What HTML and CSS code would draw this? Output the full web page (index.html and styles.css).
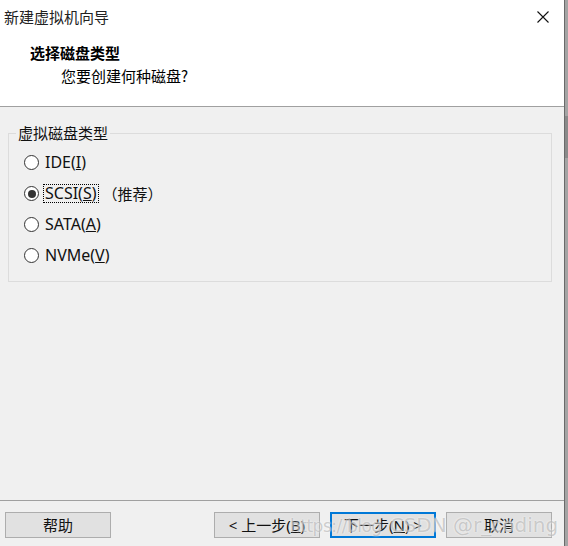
FILE: index.html
```html
<!DOCTYPE html>
<html lang="zh-CN">
<head>
<meta charset="utf-8">
<title>新建虚拟机向导</title>
<link rel="stylesheet" href="styles.css">
</head>
<body>
<div class="screen">
  <div class="window">
    <div class="header">
      <div class="titlebar">
        <span class="title">新建虚拟机向导</span>
        <svg class="close" width="12" height="12" viewBox="0 0 12 12"><path d="M0.5 0.5 L11.5 11.5 M11.5 0.5 L0.5 11.5" stroke="#111" stroke-width="1.1" fill="none"/></svg>
      </div>
      <div class="heading">选择磁盘类型</div>
      <div class="sub">您要创建何种磁盘?</div>
    </div>
    <div class="body">
      <fieldset class="group">
        <legend class="legend">虚拟磁盘类型</legend>
        <div class="options">
          <div class="option"><span class="radio"></span><span class="label">IDE(<u>I</u>)</span></div>
          <div class="option"><span class="radio checked"></span><span class="label focus">SCSI(<u>S</u>)</span><span class="note">（推荐）</span></div>
          <div class="option"><span class="radio"></span><span class="label">SATA(<u>A</u>)</span></div>
          <div class="option"><span class="radio"></span><span class="label">NVMe(<u>V</u>)</span></div>
        </div>
      </fieldset>
    </div>
    <div class="footer">
      <button class="btn">帮助</button>
      <div class="spacer"></div>
      <button class="btn">&lt; 上一步(<u>B</u>)</button>
      <button class="btn default">下一步(<u>N</u>) &gt;</button>
      <button class="btn">取消</button>
      <div class="watermark"><span class="wm1">https://blog</span><span class="wm2">CSDN @r_coding</span></div>
    </div>
  </div>
  <div class="edge"><div class="edge-thumb"></div></div>
</div>
</body>
</html>
```
FILE: styles.css
```css
*, *::before, *::after { box-sizing: border-box; }
html, body {
  margin: 0;
  padding: 0;
  width: 568px;
  height: 546px;
  overflow: hidden;
  background: #f0f0f0;
}
.screen {
  display: flex;
  width: 568px;
  height: 546px;
  font-family: "Noto Sans", "Noto Sans CJK SC", sans-serif;
  font-size: 16px;
  color: #1a1a1a;
}
.window {
  width: 564px;
  display: flex;
  flex-direction: column;
  background: #f0f0f0;
  position: relative;
}
.header {
  height: 107px;
  background: #fff;
  border-bottom: 1px solid #a0a0a0;
}
.titlebar {
  height: 33px;
  display: flex;
  align-items: center;
  justify-content: space-between;
  padding: 0 15px 0 4px;
}
.title {
  font-family: "Noto Sans CJK SC", sans-serif;
  font-size: 15px;
  line-height: 20px;
  color: #222;
}
.close { display: block; }
.heading {
  margin-top: 10px;
  padding-left: 30px;
  font-family: "Noto Sans CJK SC", sans-serif;
  font-weight: bold;
  font-size: 15px;
  line-height: 20px;
  color: #000;
}
.sub {
  margin-top: 3px;
  padding-left: 61px;
  font-family: "Noto Sans CJK SC", sans-serif;
  font-size: 15px;
  line-height: 20px;
  color: #000;
}
.body {
  flex: 1;
  padding: 16px 12px 0 8px;
}
.group {
  margin: 0;
  border: 1px solid #dcdcdc;
  padding: 4px 7px 10px 7px;
}
.legend {
  padding: 0 2px;
  font-family: "Noto Sans CJK SC", sans-serif;
  font-size: 15px;
  line-height: 20px;
  color: #111;
}
.options {
  display: flex;
  flex-direction: column;
}
.option {
  height: 31px;
  display: flex;
  align-items: center;
  padding-left: 8px;
}
.radio {
  width: 15px;
  height: 15px;
  border: 1px solid #333;
  border-radius: 50%;
  background: #fff;
  margin-right: 4px;
  display: flex;
  align-items: center;
  justify-content: center;
  flex: none;
}
.radio.checked::after {
  content: "";
  width: 8px;
  height: 8px;
  border-radius: 50%;
  background: #333;
}
.label {
  border: 1px dotted transparent;
  padding: 0 1px;
  line-height: 17px;
  color: #111;
}
.label.focus {
  border-color: #000;
}
.note {
  font-family: "Noto Sans CJK SC", sans-serif;
  font-size: 15px;
  margin-left: 4px;
  color: #111;
}
.footer {
  height: 46px;
  border-top: 1px solid #a0a0a0;
  display: flex;
  align-items: flex-start;
  padding: 11px 12px 0 5px;
  gap: 10px;
  position: relative;
}
.spacer { flex: 1; }
.btn {
  width: 106px;
  height: 26px;
  margin: 0;
  padding: 0;
  background: #e1e1e1;
  border: 1px solid #adadad;
  font-family: "Noto Sans", "Noto Sans CJK SC", sans-serif;
  font-size: 15px;
  line-height: 22px;
  color: #111;
}
.btn.default {
  border-color: #0078d7;
  box-shadow: inset 0 0 0 1px #0078d7;
}
.watermark {
  position: absolute;
  left: 290px;
  top: 9px;
  width: 270px;
  font-family: "DejaVu Sans", sans-serif;
  font-size: 20px;
  line-height: 30px;
  color: rgba(150, 150, 150, 0.45);
  text-shadow: 0 0 2px rgba(255, 255, 255, 0.9);
  white-space: nowrap;
  pointer-events: none;
}
.wm1 { font-size: 17px; letter-spacing: -0.5px; }
.wm2 { margin-left: 8px; }
.edge {
  width: 4px;
  border-left: 1px solid #6a6a6a;
  background: #a4a4a4;
  padding-top: 116px;
}
.edge-thumb {
  height: 42px;
  background: #8a8a8a;
}
```
